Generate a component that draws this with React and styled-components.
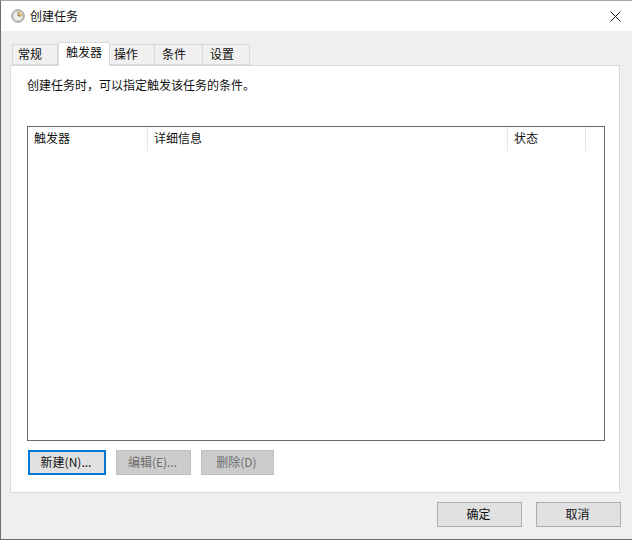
import React from 'react'
import styled, { createGlobalStyle } from 'styled-components'

const Global = createGlobalStyle`
  html, body { margin: 0; padding: 0; background: #f0f0f0; }
  * { box-sizing: border-box; }
`

const Window = styled.div`
  width: 632px;
  height: 540px;
  display: flex;
  flex-direction: column;
  background: #efefef;
  border-left: 1px solid #6d6d6d;
  border-bottom: 1px solid #6d6d6d;
  border-top: 1px solid #a8a8a8;
  font-family: "Noto Sans CJK SC", "Liberation Sans", sans-serif;
  font-size: 12px;
  color: #111;
  overflow: hidden;
`

const TitleBar = styled.div`
  height: 30px;
  flex: none;
  display: flex;
  align-items: center;
  background: #fff;
  padding-left: 10px;
  gap: 5px;
  padding-right: 11px;
`

const Title = styled.span`
  flex: 1;
  line-height: 16px;
  margin-bottom: 1px;
`

const Body = styled.div`
  flex: 1;
  display: flex;
  flex-direction: column;
  padding: 10px 11px 11px 9px;
`

const TabRow = styled.div`
  height: 24px;
  flex: none;
  display: flex;
  align-items: flex-end;
  padding-left: 2px;
  position: relative;
  z-index: 1;
`

const Tab = styled.div`
  width: ${p => p.$w}px;
  height: ${p => (p.$active ? 24 : 21)}px;
  margin-bottom: ${p => (p.$active ? -1 : 0)}px;
  padding-left: ${p => p.$pad}px;
  background: ${p => (p.$active ? '#fff' : '#f0f0f0')};
  border: 1px solid #d9d9d9;
  border-bottom: ${p => (p.$active ? 'none' : '1px solid #d9d9d9')};
  border-left-width: ${p => (p.$first || p.$active ? 1 : 0)}px;
  line-height: 18px;
  white-space: nowrap;
`

const Panel = styled.div`
  width: 610px;
  height: 428px;
  flex: none;
  display: flex;
  flex-direction: column;
  background: #fff;
  border: 1px solid #d9d9d9;
  padding: 11px 14px 0 16px;
`

const Hint = styled.div`
  line-height: 16px;
  height: 49px;
  flex: none;
`

const ListBox = styled.div`
  width: 578px;
  height: 315px;
  flex: none;
  border: 1px solid #696969;
  background: #fff;
`

const HeaderRow = styled.div`
  height: 25px;
  display: flex;
`

const HeaderCell = styled.div`
  width: ${p => p.$w}px;
  height: 24px;
  padding-left: 6px;
  line-height: 22px;
  border-right: 1px solid #e5e5e5;
`

const ActionRow = styled.div`
  display: flex;
  gap: 10px;
  margin-top: 9px;
  margin-left: 1px;
`

const Button = styled.div`
  width: ${p => p.$w}px;
  height: 25px;
  display: flex;
  align-items: center;
  justify-content: center;
  padding-bottom: 2px;
  padding-right: 2px;
  letter-spacing: ${p => p.$spread || 0}px;
  background: ${p => (p.$disabled ? '#cccccc' : '#e1e1e1')};
  color: ${p => (p.$disabled ? '#6d6d6d' : '#111')};
  border: ${p => (p.$focus ? '2px solid #0078d7' : p.$disabled ? '1px solid #bfbfbf' : '1px solid #adadad')};
  line-height: 16px;
`

const Footer = styled.div`
  display: flex;
  justify-content: flex-end;
  gap: 14px;
  margin-top: 9px;
`

const ClockIcon = () => (
  <svg width="14" height="14" viewBox="0 0 14 14">
    <circle cx="7" cy="7" r="6.2" fill="#dcdcdc" stroke="#8a8a8a" />
    <circle cx="7" cy="7" r="4.6" fill="#f6f3e6" stroke="#b5b5b5" strokeWidth="0.6" />
    <path d="M7 2.6 A4.4 4.4 0 0 1 11.4 7 L7 7 Z" fill="#eec878" />
    <path d="M7 3.2 V7 H10.2" fill="none" stroke="#6b6b6b" strokeWidth="0.9" />
  </svg>
)

const CloseIcon = () => (
  <svg width="11" height="11" viewBox="0 0 11 11">
    <path d="M0.5 0.5 L10.5 10.5 M10.5 0.5 L0.5 10.5" stroke="#1a1a1a" strokeWidth="1" />
  </svg>
)

const tabs = [
  { label: '常规', w: 46, pad: 5 },
  { label: '触发器', w: 52, pad: 7, active: true },
  { label: '操作', w: 45, pad: 4 },
  { label: '条件', w: 48, pad: 7 },
  { label: '设置', w: 47, pad: 7 },
]

export default function App() {
  return (
    <Window>
      <Global />
      <TitleBar>
        <ClockIcon />
        <Title>创建任务</Title>
        <CloseIcon />
      </TitleBar>
      <Body>
        <TabRow>
          {tabs.map((t, i) => (
            <Tab key={t.label} $w={t.w} $pad={t.pad} $active={t.active} $first={i === 0}>{t.label}</Tab>
          ))}
        </TabRow>
        <Panel>
          <Hint>创建任务时，可以指定触发该任务的条件。</Hint>
          <ListBox>
            <HeaderRow>
              <HeaderCell $w={120}>触发器</HeaderCell>
              <HeaderCell $w={360}>详细信息</HeaderCell>
              <HeaderCell $w={78}>状态</HeaderCell>
            </HeaderRow>
          </ListBox>
          <ActionRow>
            <Button $w={78} $focus>新建(N)...</Button>
            <Button $w={75} $disabled>编辑(E)...</Button>
            <Button $w={73} $disabled>删除(D)</Button>
          </ActionRow>
        </Panel>
        <Footer>
          <Button $w={85}>确定</Button>
          <Button $w={85}>取消</Button>
        </Footer>
      </Body>
    </Window>
  )
}
